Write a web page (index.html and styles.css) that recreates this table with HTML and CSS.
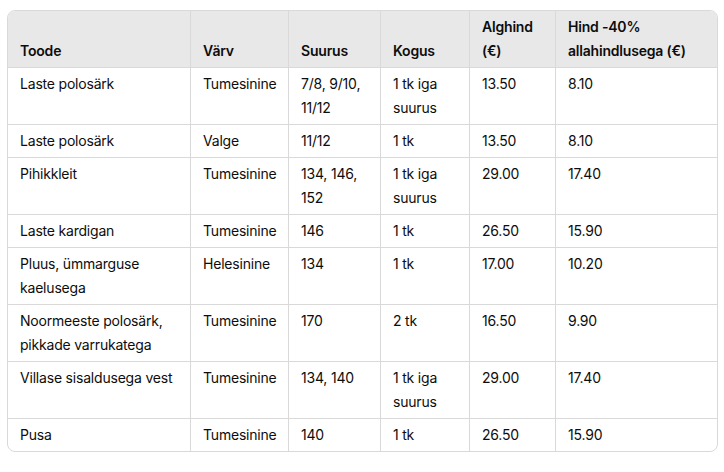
FILE: index.html
```html
<!DOCTYPE html>
<html lang="et">
<head>
<meta charset="utf-8">
<link rel="stylesheet" href="styles.css">
</head>
<body>
<div class="wrap">
<table class="tbl">
<colgroup>
<col class="c1"><col class="c2"><col class="c3"><col class="c4"><col class="c5"><col class="c6">
</colgroup>
<thead>
<tr><th>Toode</th><th>Värv</th><th>Suurus</th><th>Kogus</th><th>Alghind (€)</th><th>Hind -40% allahindlusega (€)</th></tr>
</thead>
<tbody>
<tr><td>Laste polosärk</td><td>Tumesinine</td><td>7/8, 9/10, 11/12</td><td>1 tk iga suurus</td><td>13.50</td><td>8.10</td></tr>
<tr><td>Laste polosärk</td><td>Valge</td><td>11/12</td><td>1 tk</td><td>13.50</td><td>8.10</td></tr>
<tr><td>Pihikkleit</td><td>Tumesinine</td><td>134, 146, 152</td><td>1 tk iga suurus</td><td>29.00</td><td>17.40</td></tr>
<tr><td>Laste kardigan</td><td>Tumesinine</td><td>146</td><td>1 tk</td><td>26.50</td><td>15.90</td></tr>
<tr><td>Pluus, ümmarguse kaelusega</td><td>Helesinine</td><td>134</td><td>1 tk</td><td>17.00</td><td>10.20</td></tr>
<tr><td>Noormeeste polosärk, pikkade varrukatega</td><td>Tumesinine</td><td>170</td><td>2 tk</td><td>16.50</td><td>9.90</td></tr>
<tr><td>Villase sisaldusega vest</td><td>Tumesinine</td><td>134, 140</td><td>1 tk iga suurus</td><td>29.00</td><td>17.40</td></tr>
<tr><td>Pusa</td><td>Tumesinine</td><td>140</td><td>1 tk</td><td>26.50</td><td>15.90</td></tr>
</tbody>
</table>
</div>
</body>
</html>
```
FILE: styles.css
```css
html, body {
  margin: 0;
  padding: 0;
  background: #ffffff;
}
body {
  font-family: Inter, "Noto Sans", sans-serif;
  font-size: 14px;
  letter-spacing: -0.2px;
  color: #0d0d0d;
}
.wrap {
  margin: 10px 0 0 7px;
  width: 711px;
  border: 1px solid #d9d9d9;
  border-radius: 8px;
  overflow: hidden;
  box-sizing: border-box;
}
.tbl {
  width: 100%;
  border-collapse: separate;
  border-spacing: 0;
  table-layout: fixed;
}
.c1 { width: 183px; }
.c2 { width: 98px; }
.c3 { width: 92px; }
.c4 { width: 89px; }
.c5 { width: 86px; }
.c6 { width: auto; }
.tbl th, .tbl td {
  padding: 4px 12px;
  line-height: 24px;
  text-align: left;
  border-right: 1px solid #d9d9d9;
  border-bottom: 1px solid #d9d9d9;
}
.tbl th:last-child, .tbl td:last-child {
  border-right: none;
}
.tbl tbody tr:last-child td {
  border-bottom: none;
}
.tbl th {
  background: #e8e8e8;
  font-weight: 600;
  vertical-align: bottom;
}
.tbl td {
  vertical-align: top;
}
```
